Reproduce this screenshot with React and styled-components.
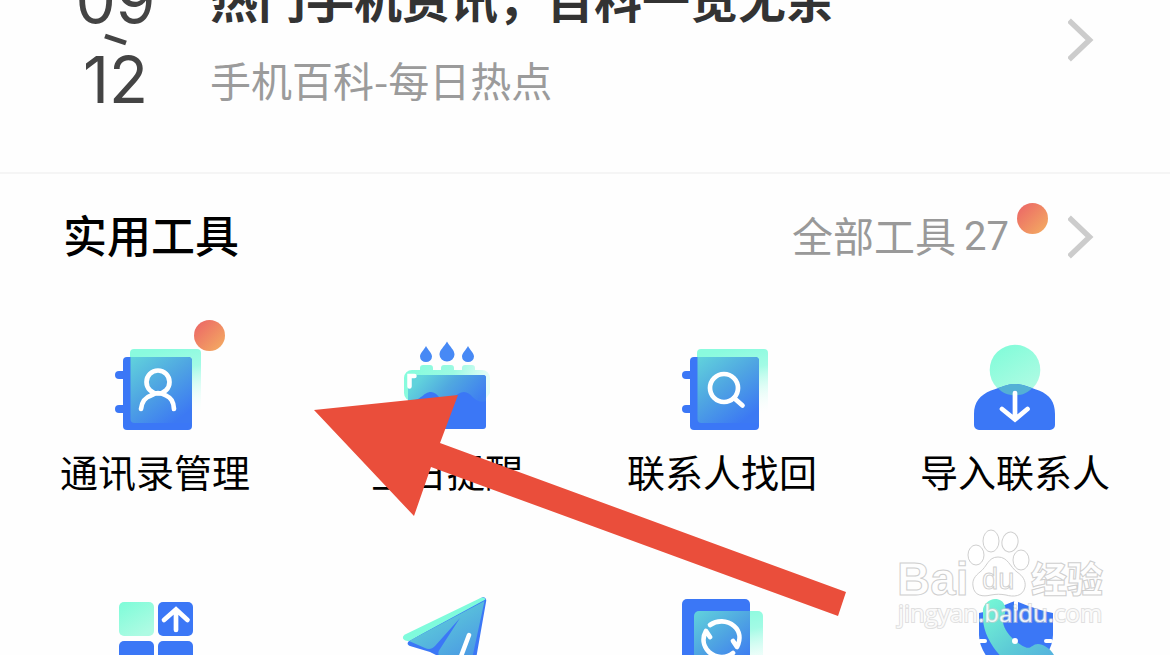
import React from "react";
import styled, { createGlobalStyle } from "styled-components";

const GlobalStyle = createGlobalStyle`
  * {
    box-sizing: border-box;
  }

  body {
    margin: 0;
    overflow: hidden;
    background: #fefefe;
    font-family: "Noto Sans CJK SC", sans-serif;
  }
`;

const Page = styled.main`
  position: relative;
  display: flow-root;
  max-height: 100vh;
  overflow: hidden;
`;

const NewsCard = styled.a`
  margin-top: -30px;
  padding: 0 76px 62px 77px;
  display: flex;
  align-items: center;
  border-bottom: 2px solid #f5f5f5;
  text-decoration: none;
`;

const DateRange = styled.div`
  width: 77px;
  margin-right: 56px;
  display: flex;
  flex-direction: column;
  align-items: center;
  font-family: Inter, sans-serif;
  font-size: 64px;
  line-height: 60px;
  color: #444444;
`;

const NewsText = styled.div`
  padding-bottom: 6px;
  flex-grow: 1;
`;

const NewsTitle = styled.h2`
  margin: 0 0 31px;
  font-weight: 700;
  font-size: 48px;
  line-height: 52px;
  color: #333333;
`;

const NewsSource = styled.p`
  margin: 0;
  font-weight: 400;
  font-size: 41px;
  line-height: 50px;
  color: #9b9b9b;
`;

const ToolsHeader = styled.header`
  height: 125px;
  margin-bottom: 4px;
  padding: 0 76px 0 63px;
  display: flex;
  align-items: center;
  justify-content: space-between;
`;

const ToolsTitle = styled.h2`
  margin: 0;
  padding-bottom: 6px;
  font-weight: 500;
  font-size: 44px;
  line-height: 60px;
  color: #000000;
`;

const AllTools = styled.a`
  display: flex;
  align-items: center;
  line-height: 60px;
  color: #999999;
  text-decoration: none;
`;

const AllToolsText = styled.span`
  padding-bottom: 6px;
  font-size: 41px;
`;

const Count = styled.span`
  position: relative;
  margin: 0 59px 0 8px;
  font-family: Roboto, sans-serif;
  font-size: 40px;
`;

const Dot = styled.i`
  position: absolute;
  top: ${(props) => props.$top};
  left: ${(props) => props.$left};
  width: 31px;
  height: 31px;
  border-radius: 100%;
  background: linear-gradient(135deg, #ec6a66 10%, #f3a862 90%);
`;

const Grid = styled.nav`
  display: grid;
  grid-template-columns: 310fr 274fr 276fr 310fr;
`;

const Tool = styled.a`
  padding: 32px 0 57px;
  display: flex;
  flex-direction: column;
  align-items: center;
  text-decoration: none;
`;

const IconBox = styled.span`
  position: relative;
  width: 110px;
  height: 100px;

  svg {
    display: block;
    overflow: visible;
  }
`;

const Label = styled.span`
  margin-top: 12px;
  padding-bottom: 2px;
  font-size: 38px;
  line-height: 47px;
  color: #000000;
  white-space: nowrap;
`;

const Pointer = styled.svg`
  position: absolute;
  top: 395px;
  left: 314px;
  pointer-events: none;
`;

const Watermark = styled.svg`
  position: absolute;
  top: 525px;
  right: 60px;
  pointer-events: none;
`;

const BLUE = "#3b77f6";

const Chevron = () => (
  <svg width="26" height="44" viewBox="0 0 26 44" fill="none">
    <path d="M1 2.500 21.500 22 1 41.500" stroke="#cccccc" strokeWidth="5.500" />
  </svg>
);

const Tilde = () => (
  <svg width="24" height="20" viewBox="0 0 24 20">
    <path d="M1 6 22 13" stroke="#444444" strokeWidth="5" />
  </svg>
);

const Gradients = () => (
  <svg width="0" height="0" style={{ position: "absolute" }}>
    <defs>
      <linearGradient id="mint" x1="0" y1="0" x2="0.6" y2="1">
        <stop offset="0" stopColor="#7dfcd8" />
        <stop offset="1" stopColor="#aefbe3" />
      </linearGradient>
      <linearGradient id="fade" x1="0.5" y1="0" x2="0.7" y2="1">
        <stop offset="0" stopColor="#8afbde" />
        <stop offset="0.3" stopColor="#a3fbe5" />
        <stop offset="0.95" stopColor="#ffffff" stopOpacity="0" />
      </linearGradient>
      <linearGradient id="side" x1="0" y1="0" x2="1" y2="0.2">
        <stop offset="0" stopColor="#82fcdc" />
        <stop offset="0.6" stopColor="#9dfae2" />
        <stop offset="1" stopColor="#e6fef8" />
      </linearGradient>
      <linearGradient id="mix" x1="0" y1="0" x2="0.7" y2="1">
        <stop offset="0" stopColor="#61d3dc" />
        <stop offset="0.5" stopColor="#4fa5e2" />
        <stop offset="1" stopColor="#3c79f3" />
      </linearGradient>
      <linearGradient id="water" x1="0" y1="0.3" x2="1" y2="0.6">
        <stop offset="0.1" stopColor="#61d3dc" />
        <stop offset="0.5" stopColor="#50a8e0" />
        <stop offset="1" stopColor="#3f80f0" />
      </linearGradient>
      <linearGradient id="wing" x1="0" y1="0" x2="0.8" y2="1">
        <stop offset="0.2" stopColor="#5fd0d8" />
        <stop offset="1" stopColor="#4a98e4" />
      </linearGradient>
      <linearGradient id="phone" x1="0" y1="0" x2="0.8" y2="1">
        <stop offset="0" stopColor="#77fad5" />
        <stop offset="0.6" stopColor="#5dcbd6" />
        <stop offset="1" stopColor="#55b0df" />
      </linearGradient>
    </defs>
  </svg>
);

const Icon = ({ children }) => (
  <svg width="110" height="100" viewBox="0 0 110 100" fill="none" strokeLinecap="round">
    {children}
  </svg>
);

const Book = ({ children }) => (
  <Icon>
    <rect x="30" y="14" width="71" height="74" rx="4" fill="url(#fade)" />
    <rect x="15" y="36" width="14" height="8" rx="4" fill={BLUE} />
    <rect x="15" y="70" width="14" height="8" rx="4" fill={BLUE} />
    <rect x="23" y="22" width="69" height="73" rx="4" fill={BLUE} />
    <path d="M30.500 22H88a4 4 0 0 1 4 4V88H34.500a4 4 0 0 1-4-4Z" fill="url(#mix)" />
    {children}
  </Icon>
);

const ContactsIcon = () => (
  <Book>
    <g stroke="#ffffff" strokeWidth="4.700">
      <circle cx="58" cy="47" r="11.500" />
      <path d="M41 74C42 66 45 62.500 51 60.500C54 59 55 58 58 58C61 58 63 59 66 60.500C71 63 73.500 66 74 74" />
    </g>
  </Book>
);

const FindIcon = () => (
  <Book>
    <g stroke="#ffffff" strokeWidth="4.700">
      <circle cx="57" cy="53" r="14" />
      <path d="M67 63 75.500 70.500" />
    </g>
  </Book>
);

const CakeIcon = () => (
  <Icon>
    <g fill="#4789f5">
      <path d="M34 11C36 15 40 18 40 21.500A6 5.500 0 0 1 28 21.500C28 18 32 15 34 11Z" />
      <path d="M55 6.500C58 12 62.500 15 62.500 19.500A7.500 7 0 0 1 47.500 19.500C47.500 15 52 12 55 6.500Z" />
      <path d="M76 11C78 15 82 18 82 21.500A6 5.500 0 0 1 70 21.500C70 18 74 15 76 11Z" />
    </g>
    <path
      d="M12 43a8 8 0 0 1 8-8h8v-2a3 3 0 0 1 3-3h7a3 3 0 0 1 3 3v2h8v-2a3 3 0 0 1 3-3h7a3 3 0 0 1 3 3v2h8v-2a3 3 0 0 1 3-3h7a3 3 0 0 1 3 3v2h7a8 8 0 0 1 8 8V58L92 66H20a8 8 0 0 1-8-8Z"
      fill="url(#side)"
    />
    <rect x="16" y="40" width="78" height="54" rx="3" fill={BLUE} />
    <path
      d="M16 40H91a3 3 0 0 1 3 3V66C83 70 80 57 72 57C64 57 62 66 55 66C47 66 46 57 39 57C31 57 30 66 16 66Z"
      fill="url(#water)"
    />
    <path d="M17.500 51.500V41H22.500" stroke="#ffffff" strokeWidth="4.500" />
  </Icon>
);

const ImportIcon = () => (
  <Icon>
    <circle cx="55" cy="35" r="25.300" fill="url(#mint)" />
    <path
      d="M14 90V79C14 67 20 60 31 55.500C42 52 47 49 55 49C63 49 68 52 79 55.500C90 60 95 67 95 79V90a5 5 0 0 1-5 5H19a5 5 0 0 1-5-5Z"
      fill={BLUE}
    />
    <path
      d="M38 53C45 51 48 49 55 49C62 49 65 51 72 53C68 58 62 60.300 55 60.300C48 60.300 42 58 38 53Z"
      fill="#54b0d5"
    />
    <path d="M55 58V84M42 74 55 84.500 67.500 74" stroke="#ffffff" strokeWidth="4.700" />
  </Icon>
);

const AppsIcon = () => (
  <Icon>
    <rect x="19" y="17" width="35" height="34" rx="5" fill="url(#mint)" />
    <rect x="58" y="17" width="35" height="34" rx="5" fill={BLUE} />
    <rect x="19" y="56" width="35" height="34" rx="5" fill={BLUE} />
    <rect x="58" y="56" width="35" height="34" rx="5" fill={BLUE} />
    <path d="M76 26V45M64 35 76 24.500 87.500 35" stroke="#ffffff" strokeWidth="4.700" />
  </Icon>
);

const PlaneIcon = () => (
  <Icon>
    <path d="M17 56 90 12.500C93 11.500 95 14 94 17L84 74H52L38 67 18 61C15 60 15 58 17 56Z" fill={BLUE} />
    <path d="M13 49.500 89 12.800C91 12 93 12.500 93.500 14.500L17 56C11 56.500 9 52 13 49.500Z" fill="#7ffbdc" />
    <path d="M17 56 92.500 16 80 74H50C45 70 46 67 48 64L68 33 43 61C40 64 37 65 33 63Z" fill="url(#wing)" />
    <path d="M77 50 68 74" stroke="#ffffff" strokeWidth="4.500" />
  </Icon>
);

const SyncIcon = () => (
  <Icon>
    <rect x="27" y="26" width="69" height="74" rx="5" fill="url(#fade)" />
    <rect x="15" y="14" width="68" height="74" rx="5" fill={BLUE} />
    <path d="M32 26H83V88H27V31a5 5 0 0 1 5-5Z" fill="url(#mix)" />
    <g stroke="#ffffff" strokeWidth="4.700" strokeLinejoin="round">
      <path d="M43 40C50 35 60 35 67 41C73 46 74 54 70 62L66 56" />
      <path d="M66 68C59 74 49 73 42 67C36 61 35 53 39 46L43 52" />
    </g>
  </Icon>
);

const ShieldIcon = () => (
  <Icon>
    <path d="M19 28C32 26 44 20 55 16C66 20 80 26 93 28V50C93 67 77 86 56 94C35 86 19 67 19 50Z" fill={BLUE} />
    <path
      d="M23 27C22 20 29 14 35 14C40 14 43 16 45 21C47 27 43 32 43 37C44 46 54 57 65 62C71 65 72 59 78 59C83 59 90 63 94 70V86H62C42 78 24 55 23 34Z"
      fill="url(#phone)"
    />
    <path d="M56 17V24M20 56H25M86 56H91" stroke="#ffffff" strokeWidth="4" />
    <circle cx="55" cy="56" r="3" fill="#ffffff" />
  </Icon>
);

const tools = [
  { label: "通讯录管理", icon: ContactsIcon, isNew: true },
  { label: "生日提醒", icon: CakeIcon },
  { label: "联系人找回", icon: FindIcon },
  { label: "导入联系人", icon: ImportIcon },
  { icon: AppsIcon },
  { icon: PlaneIcon },
  { icon: SyncIcon },
  { icon: ShieldIcon },
];

const ToolItem = ({ label, icon: ToolIcon, isNew }) => (
  <Tool href="#">
    <IconBox>
      <ToolIcon />
      {isNew && <Dot $top="-15px" $left="94px" />}
    </IconBox>
    {label && <Label>{label}</Label>}
  </Tool>
);

const App = () => {
  return (
    <Page>
      <GlobalStyle />
      <Gradients />
      <NewsCard href="#">
        <DateRange>
          <span>09</span>
          <Tilde />
          <span>12</span>
        </DateRange>
        <NewsText>
          <NewsTitle>热门手机资讯，百科一览无余</NewsTitle>
          <NewsSource>手机百科-每日热点</NewsSource>
        </NewsText>
        <Chevron />
      </NewsCard>
      <section>
        <ToolsHeader>
          <ToolsTitle>实用工具</ToolsTitle>
          <AllTools href="#">
            <AllToolsText>全部工具</AllToolsText>
            <Count>
              27
              <Dot $top="-4px" $left="53px" />
            </Count>
            <Chevron />
          </AllTools>
        </ToolsHeader>
        <Grid>
          {tools.map((tool, index) => (
            <ToolItem key={index} {...tool} />
          ))}
        </Grid>
      </section>
      <Pointer width="532" height="221" viewBox="0 0 532 221">
        <path d="M0 15 144 0 126 48 532 197 524 221 117 72 100 121Z" fill="#ea4e3b" />
      </Pointer>
      <Watermark width="220" height="110" viewBox="0 0 220 110">
        <g fill="#ffffff" fillOpacity="0.9" stroke="#cfcfcf" strokeWidth="1">
          <text x="7" y="70" fontFamily="Liberation Sans" fontWeight="700" fontSize="46">
            Bai
          </text>
          <ellipse cx="86" cy="30" rx="8" ry="10" />
          <ellipse cx="101" cy="16" rx="8" ry="11" />
          <ellipse cx="120" cy="17" rx="8" ry="10" transform="rotate(12 120 17)" />
          <ellipse cx="131" cy="35" rx="8" ry="10" />
          <path d="M108 32C118 32 120 42 127 47C133 51 136 56 135 62C133 72 123 72 116 70C110 69 107 69 101 70C93 72 84 71 83 61C82 55 85 51 90 47C97 42 98 32 108 32Z" />
          <text x="92" y="64" fontFamily="Liberation Sans" fontWeight="400" fontSize="29">
            du
          </text>
          <text x="141" y="68" fontFamily="Noto Sans CJK SC" fontWeight="900" fontSize="36">
            经验
          </text>
        </g>
        <text
          x="8"
          y="97"
          fontFamily="Open Sans"
          fontSize="24"
          fill="#ffffff"
          fillOpacity="0.85"
          stroke="#cccccc"
          strokeOpacity="0.6"
          strokeWidth="2"
          paintOrder="stroke"
        >
          jingyan.baidu.com
        </text>
      </Watermark>
    </Page>
  );
};

export default App;
